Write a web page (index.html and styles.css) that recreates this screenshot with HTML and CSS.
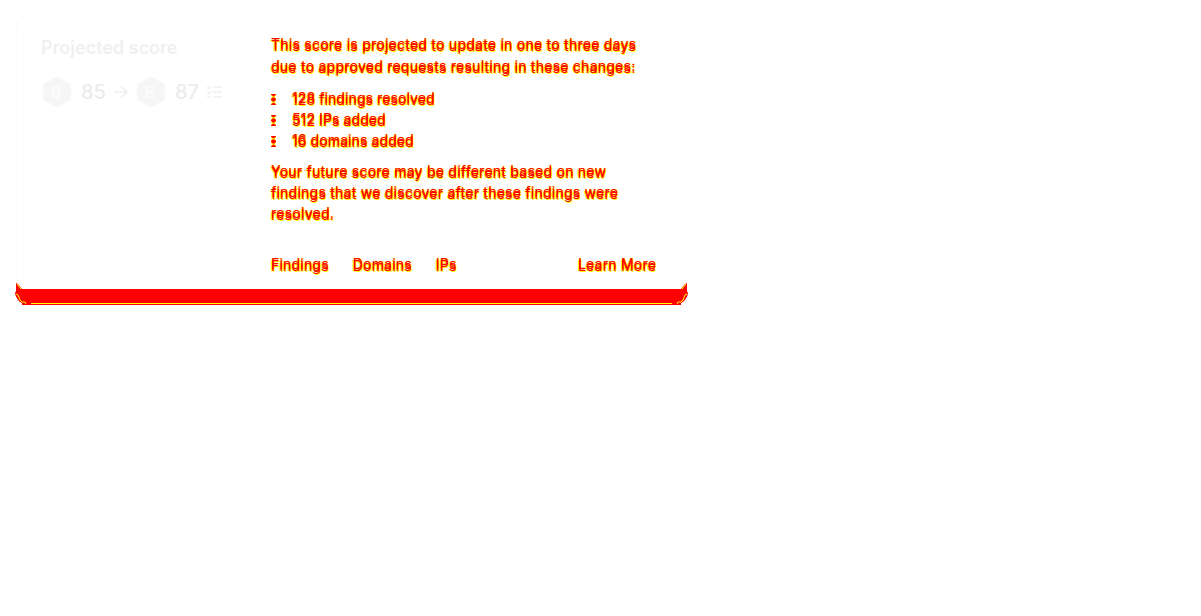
FILE: index.html
```html
<!DOCTYPE html>
<html lang="en">
<head>
    <meta charset="UTF-8">
    <meta name="viewport" content="width=device-width, initial-scale=1.0">
    <title>Projected score</title>
    <link rel="stylesheet" href="styles.css">
</head>
<body>
    <div class="card">
        <div class="card-body">
            <div class="score">
                <h2 class="score-title">Projected score</h2>
                <div class="score-row">
                    <svg class="hex" width="30" height="32" viewBox="0 0 30 32"><path d="M15 0 L29 8 V24 L15 32 L1 24 V8 Z"/></svg>
                    <span class="hex-letter">B</span>
                    <span class="score-num">85</span>
                    <svg class="arrow" width="16" height="14" viewBox="0 0 16 14"><path d="M1 7 H14 M8.500 1.500 L14 7 L8.500 12.500"/></svg>
                    <svg class="hex" width="30" height="32" viewBox="0 0 30 32"><path d="M15 0 L29 8 V24 L15 32 L1 24 V8 Z"/></svg>
                    <span class="hex-letter">B</span>
                    <span class="score-num">87</span>
                    <svg class="checks" width="17" height="14" viewBox="0 0 17 14"><path d="M1 2 L2.500 3.500 L5 1 M1 7 L2.500 8.500 L5 6 M1 12 H4 M7 2 H16 M7 7 H16 M7 12 H16"/></svg>
                </div>
            </div>
            <div class="details">
                <p class="intro">This score is projected to update in one to three days due to approved requests resulting in these changes:</p>
                <ul class="changes">
                    <li>128 findings resolved</li>
                    <li>512 IPs added</li>
                    <li>16 domains added</li>
                </ul>
                <p class="note">Your future score may be different based on new findings that we discover after these findings were resolved.</p>
                <div class="links">
                    <a href="#">Findings</a>
                    <a href="#">Domains</a>
                    <a href="#">IPs</a>
                    <a href="#" class="learn">Learn More</a>
                </div>
            </div>
        </div>
        <div class="card-foot">
            <svg class="corner corner-left" width="16" height="22" viewBox="0 0 16 22">
                <path class="corner-fill" d="M1 0 L3 1 L7 6 H16 V22 H13 Q6 21 3 17 Q0 13 0 10 L1 8 Z"/>
                <path class="corner-line" d="M2 1 L6 6 M1 11 L3 12 L5 17 L7 19 H10 L11 21"/>
            </svg>
            <svg class="corner corner-right" width="16" height="22" viewBox="0 0 16 22">
                <path class="corner-fill" d="M1 0 L3 1 L7 6 H16 V22 H13 Q6 21 3 17 Q0 13 0 10 L1 8 Z"/>
                <path class="corner-line" d="M2 1 L6 6 M1 11 L3 12 L5 17 L7 19 H10 L11 21"/>
            </svg>
        </div>
    </div>
</body>
</html>
```

FILE: styles.css
```css
*{
    padding:0;
    margin:0;
    box-sizing: border-box;
}
body{
    background-color: #fff;
    font-family: Inter, "Liberation Sans", sans-serif;
    padding: 16px 0 0 16px;
}
.card{
    width: 671px;
    height: 290px;
    display: flex;
    flex-direction: column;
    border: 1px solid #fcfcfc;
    border-radius: 10px;
    box-shadow: -1px -1px 3px #fdfdfd;
}
.card-body{
    flex: 1;
    display: flex;
    padding: 18px 30px 0 24px;
}
/* yellow line stops short of both ends of the band */
.card-foot{
    position: relative;
    height: 16px;
    margin: 0 5px;
    background: linear-gradient(#ff0, #ff0) center 14px / calc(100% - 17px) 1px no-repeat, #f00;
}
.corner{
    position: absolute;
    bottom: 0;
}
.corner-left{
    left: -7px;
}
.corner-right{
    right: -7px;
    transform: scaleX(-1);
}
.corner-fill{
    fill: #f00;
}
.corner-line{
    fill: none;
    stroke: #ff0;
    stroke-width: 1;
}
.score{
    width: 230px;
    flex-shrink: 0;
}
.score-title{
    margin-top: -1px;
    font-size: 18px;
    line-height: 28px;
    font-weight: 600;
    color: #f0f0f0;
}
.score-row{
    display: flex;
    align-items: center;
    margin-top: 14px;
    height: 32px;
    color: #eee;
}
.hex{
    flex-shrink: 0;
    margin-left: 1px;
}
.hex path{
    fill: #f6f6f6;
}
.hex-letter{
    width: 0;
    margin-left: -21px;
    margin-right: 21px;
    font-size: 16px;
    font-weight: 500;
    color: #fcfcfc;
}
.score-num{
    margin-left: 9px;
    font-size: 20px;
    font-weight: 500;
    color: #ececec;
}
.arrow{
    margin: 0 6px 0 7px;
}
.arrow path, .checks path{
    fill: none;
    stroke: #f0f0f0;
    stroke-width: 1.500;
}
.checks{
    margin-left: 7px;
}
.details{
    flex: 1;
    font-size: 14px;
    line-height: 21px;
    color: #f00;
    text-shadow: 0 -2px 0 #f00, 1px 1px 0 #ff0, -1px 0 0 #ff0, 1px -2px 0 #ff0;
}
.intro{
    max-width: 372px;
    line-height: 22px;
    letter-spacing: 0.25px;
}
.changes{
    margin-top: 10px;
    list-style: none;
    letter-spacing: 0.1px;
}
.changes li{
    display: flex;
    align-items: center;
}
/* two stacked dots, one above and one below the line centre */
.changes li::before{
    content: "";
    width: 5px;
    height: 11px;
    margin-right: 16px;
    background: radial-gradient(circle at center, #f00 2px, #ff0 2.500px, transparent 3px) center / 5px 5.500px repeat-y;
}
.note{
    max-width: 372px;
    margin-top: 10px;
    letter-spacing: 0.25px;
}
.links{
    display: flex;
    margin-top: 30px;
    gap: 24px;
    letter-spacing: 0.2px;
}
.links a{
    color: #f00;
    text-decoration: none;
}
.links .learn{
    margin-left: auto;
}
```
